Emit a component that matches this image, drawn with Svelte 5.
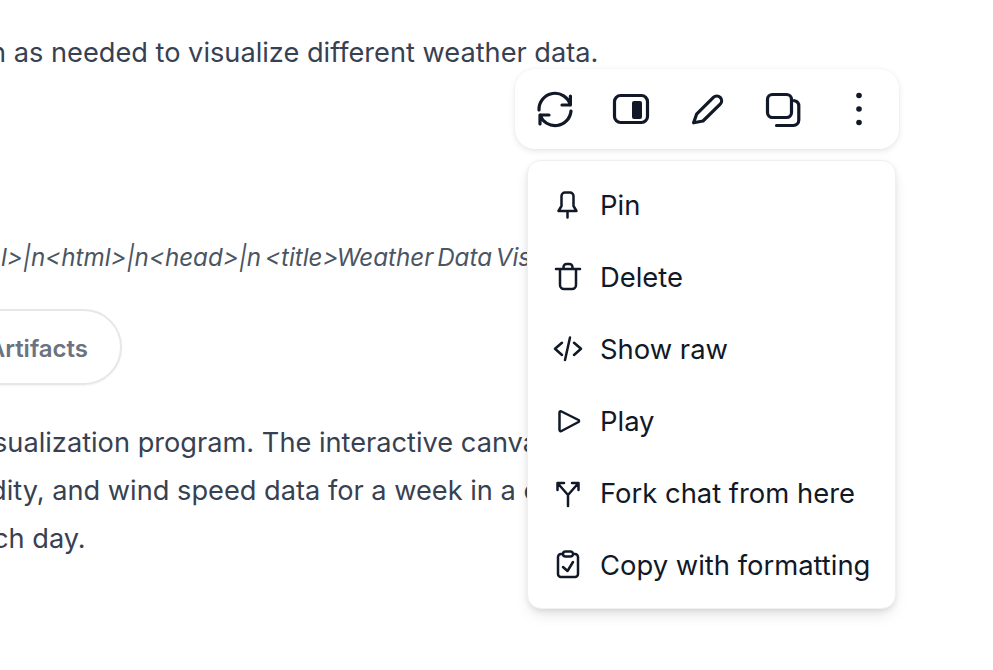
<script>
  const items = ['Pin', 'Delete', 'Show raw', 'Play', 'Fork chat from here', 'Copy with formatting'];
</script>

<div class="page">
  <div class="message">
    <p class="line first">n as needed to visualize different weather data.</p>
    <p class="code">l&gt;|n&lt;html&gt;|n&lt;head&gt;|n &lt;title&gt;Weather Data Visualization&lt;/title&gt;</p>
    <div class="pill-row"><span class="pill">Artifacts</span></div>
    <div class="para">
      <p class="line">sualization program. The interactive canvas</p>
      <p class="line tight">dity, and wind speed data for a week in a chart</p>
      <p class="line">ch day.</p>
    </div>
  </div>

  <div class="toolbar">
    <svg viewBox="0 0 24 24" class="tool"><path d="M4 12.5A8 8 0 0 1 19.7 10M19.7 5.5V10H15.5M20 13A8 8 0 0 1 4.5 15M4.5 19.5V15H9"/></svg>
    <svg viewBox="0 0 24 24" class="tool"><rect x="3.75" y="5.25" width="16.5" height="13.5" rx="3"/><rect class="solid" x="12.5" y="8" width="5" height="9" rx="1"/></svg>
    <svg viewBox="0 0 24 24" class="tool"><path d="M5.3 18.9 6.8 14.6 15.2 6.2a2.4 2.4 0 0 1 3.4 3.4L10 18Z"/></svg>
    <svg viewBox="0 0 24 24" class="tool"><rect x="4.25" y="4.75" width="12" height="11.5" rx="2.5"/><path d="M8.75 20.25H17.2a2.7 2.7 0 0 0 2.7-2.7V10.5a2.7 2.7 0 0 0-2.2-2.65"/></svg>
    <svg viewBox="0 0 24 24" class="tool"><circle class="solid" cx="12" cy="5.25" r="1.4"/><circle class="solid" cx="12" cy="12" r="1.4"/><circle class="solid" cx="12" cy="18.75" r="1.4"/></svg>
  </div>

  <div class="menu">
    {#each items as label, i}
      <div class="item">
        <svg viewBox="0 0 32 32" class="mi">
          {#if i === 0}
            <path d="M6.5 22 9.5 17V7a3.5 3.5 0 0 1 3.5-3.5h5A3.5 3.5 0 0 1 21.5 7v10l3 5ZM15.5 22v6.5"/>
          {:else if i === 1}
            <path d="M4 8h24M11.5 8V6a3 3 0 0 1 3-3h3a3 3 0 0 1 3 3v2M8 8v16a4 4 0 0 0 4 4h8a4 4 0 0 0 4-4V8"/>
          {:else if i === 2}
            <path d="M10 9.7 3 15.8l7 6.2M22 9.7l7 6.1-7 6.2M18 4.5 13 27"/>
          {:else if i === 3}
            <path d="M7.5 7.5a1.3 1.3 0 0 1 2-1L26.5 15a1.2 1.2 0 0 1 0 2L9.5 26a1.3 1.3 0 0 1-2-1Z"/>
          {:else if i === 4}
            <path d="M12 6H5.5v7M20 6h6.5v7M5.5 6 16 18 26.5 6M16 18v11"/>
          {:else}
            <path d="M11 5H9a3 3 0 0 0-3 3v17a3 3 0 0 0 3 3h14a3 3 0 0 0 3-3V8a3 3 0 0 0-3-3h-2M11 5a2.5 2.5 0 0 1 2.5-2.5h5A2.5 2.5 0 0 1 21 5a2.5 2.5 0 0 1-2.5 2.5h-5A2.5 2.5 0 0 1 11 5ZM11 18l4.5 4 5.5-9"/>
          {/if}
        </svg>
        <span>{label}</span>
      </div>
    {/each}
  </div>
</div>

<style>
  :global(body) {
    margin: 0;
    background: #fff;
  }
  .page {
    position: relative;
    width: 993px;
    height: 670px;
    overflow: hidden;
    font-family: Inter, "Liberation Sans", sans-serif;
    background: #fff;
  }
  .message {
    display: flex;
    flex-direction: column;
    padding-top: 29px;
    color: #374151;
    white-space: nowrap;
  }
  p {
    margin: 0;
  }
  .line {
    font-size: 27.2px;
    line-height: 48px;
  }
  .first {
    margin-left: -10px;
  }
  .tight {
    margin-left: -3px;
  }
  .code {
    margin-top: 157px;
    margin-left: 1px;
    font-size: 24.2px;
    line-height: 48px;
    font-style: italic;
    word-spacing: -3px;
    color: #4b5563;
  }
  .pill-row {
    margin-top: 27px;
    margin-left: -80px;
    display: flex;
  }
  .pill {
    display: inline-flex;
    align-items: center;
    box-sizing: border-box;
    height: 76px;
    width: 202px;
    justify-content: flex-end;
    padding: 2px 32px 0 0;
    border: 2px solid #e5e7eb;
    border-radius: 38px;
    font-size: 24px;
    font-weight: 600;
    color: #6b7280;
    box-shadow: 0 1px 2px rgba(0, 0, 0, 0.05);
  }
  .para {
    margin-top: 33.5px;
    margin-left: -7px;
  }
  .toolbar {
    position: absolute;
    left: 515px;
    top: 69px;
    width: 384px;
    height: 80px;
    box-sizing: border-box;
    padding: 0 16px;
    display: flex;
    align-items: center;
    gap: 28px;
    background: #fff;
    border-radius: 20px;
    box-shadow: 0 2px 6px rgba(0, 0, 0, 0.1), 0 0 2px rgba(0, 0, 0, 0.04);
  }
  svg {
    fill: none;
    stroke: #111827;
    stroke-linecap: round;
    stroke-linejoin: round;
  }
  .tool {
    width: 48px;
    height: 48px;
    flex: none;
    stroke-width: 1.6;
  }
  .solid {
    fill: #111827;
    stroke: none;
  }
  .menu {
    position: absolute;
    left: 527px;
    top: 160px;
    width: 369px;
    height: 449px;
    box-sizing: border-box;
    padding: 8px 0;
    background: #fff;
    border: 1px solid #eff0f2;
    border-radius: 14px;
    box-shadow: 0 8px 16px -4px rgba(0, 0, 0, 0.13), 0 2px 6px -1px rgba(0, 0, 0, 0.1);
    color: #111827;
    font-size: 27.4px;
  }
  .item {
    display: flex;
    align-items: center;
    gap: 16px;
    height: 72px;
    padding-left: 24px;
    white-space: nowrap;
  }
  .mi {
    width: 32px;
    height: 32px;
    flex: none;
    stroke-width: 2.5;
  }
</style>
